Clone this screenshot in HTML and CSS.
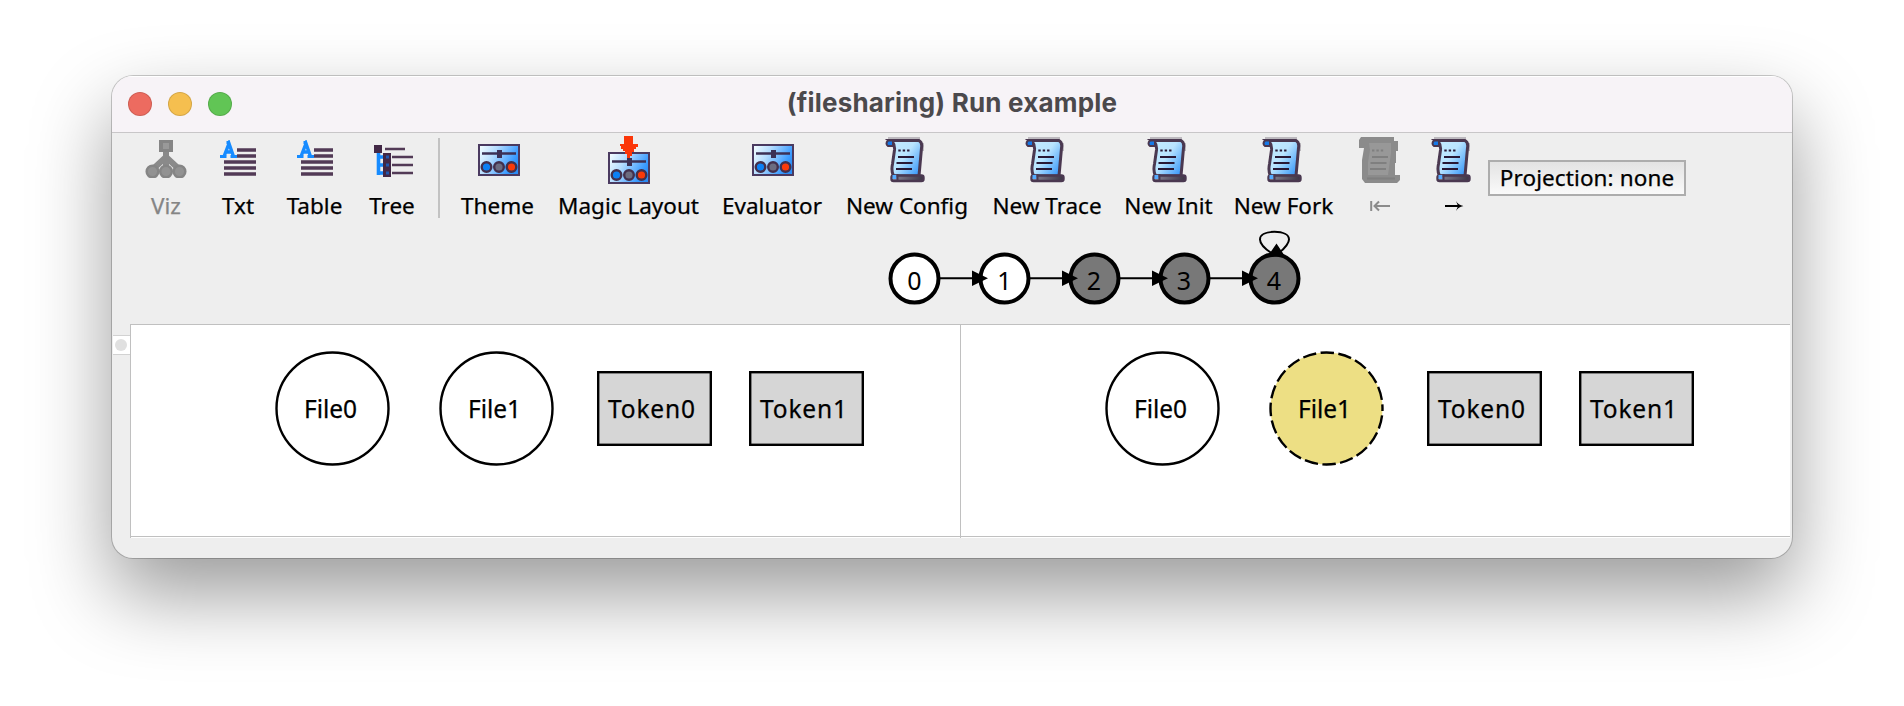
FILE: index.html
```html
<!DOCTYPE html>
<html lang="en">
<head>
<meta charset="utf-8">
<title>(filesharing) Run example</title>
<link rel="stylesheet" href="styles.css">
</head>
<body>
<svg class="defs" width="0" height="0" aria-hidden="true">
  <defs>
    <linearGradient id="panelBlue" x1="0" y1="0.2" x2="1" y2="0.6">
      <stop offset="0" stop-color="#eefaff"/><stop offset="0.35" stop-color="#b4dcff"/><stop offset="0.85" stop-color="#3b9bff"/><stop offset="1" stop-color="#2a8cf5"/>
    </linearGradient>
    <linearGradient id="paperBlue" x1="0" y1="0.1" x2="1" y2="0.9">
      <stop offset="0" stop-color="#c4ecff"/><stop offset="0.45" stop-color="#b9e4ff"/><stop offset="1" stop-color="#2f92f8"/>
    </linearGradient>
    <linearGradient id="rollGrey" x1="0" y1="0" x2="1" y2="0">
      <stop offset="0" stop-color="#8a8796"/><stop offset="1" stop-color="#3c3444"/>
    </linearGradient>
    <symbol id="text" viewBox="0 0 36 38">
      <path d="M17 10h19M17 16h19M4 22h32M4 28h32M4 34h32" stroke="#523a56" stroke-width="3.6"/>
      <path d="M4 16.5 9 3.5 13.5 16.500M5.500 12h7" fill="none" stroke="#168bff" stroke-width="3.400"/>
      <path d="M0 16.500h6.500M10.500 16.500h6.500M6.500 2.500h3" stroke="#168bff" stroke-width="3"/>
    </symbol>
    <symbol id="sliders" viewBox="0 0 42 32">
      <rect x="1" y="1" width="40" height="30" fill="url(#panelBlue)" stroke="#4a3a60" stroke-width="2"/>
      <path d="M4 9.500h34" stroke="#3c3055" stroke-width="2.400"/>
      <rect x="19" y="6" width="5" height="8" fill="#3c3055"/>
      <g stroke="#43304d" stroke-width="2.400"><circle cx="8.500" cy="23" r="4.800" fill="#0c80f5"/><circle cx="21" cy="23" r="4.800" fill="#6c6c80"/><circle cx="33.500" cy="23" r="4.800" fill="#fb3a09"/></g>
    </symbol>
    <symbol id="scroll" viewBox="0 0 42 48">
      <path d="M3 2h32M38 7v8" stroke="#bcb9be" stroke-width="2"/>
      <path d="M5 4.500h29q3.500 2 2.500 7.500L34 40H8.500q-2.500-5-1-12L9.500 14q.5-5-2-8z" fill="url(#paperBlue)" stroke="#4a3850" stroke-width="3"/>
      <path d="M3 4.500h5v5.500H3q-3-2.500 0-5.500z" fill="#167ae8" stroke="#4a3850" stroke-width="2"/>
      <path d="M13.300 14.500h2.400m2 0h2.400m2 0h2.400M13 21h16M11.500 27h16M11 33h16" stroke="#281835" stroke-width="2.200"/>
      <rect x="6.500" y="39.500" width="32" height="5.500" rx="2" fill="url(#rollGrey)" stroke="#4a3850" stroke-width="2.400"/>
      <path d="M7.500 39h4v4h-4z" fill="#54aaff"/><path d="M12.500 38v7" stroke="#4a3850" stroke-width="2"/>
    </symbol>
    <symbol id="scrollOff" viewBox="0 0 42 48">
      <path d="M3 1h33v4h4v10h-2v12h-1v12h5v5l-3 3H7l-3-4V24l2-12H1V4z" fill="#8b8b8b"/>
      <path d="M11 7h22v10l-3 22H10V26l2-12z" fill="#989898"/>
      <path d="M14 14.500h2.400m2 0h2.400m2 0h2.400M14 21h16M12.500 27h16M12 33h16M9 42.500h28" stroke="#7f7f7f" stroke-width="2"/>
    </symbol>
  </defs>
</svg>
<main class="window">
  <header class="titlebar">
    <div class="lights"><i class="light red"></i><i class="light amber"></i><i class="light green"></i></div>
    <h1 class="title">(filesharing) Run example</h1>
  </header>
  <nav class="toolbar">
    <div class="tool off"><svg class="icon" width="42" height="38" viewBox="0 0 42 38"><path d="M21 11v8M21 17 7 30M21 17l14 13M21 17v14" stroke="#8a8a8a" stroke-width="6" fill="none"/><rect x="14" y="0" width="14" height="12" fill="#858585"/><rect x="18" y="3" width="6" height="6" fill="#999"/><g fill="#929292" stroke="#858585" stroke-width="2.500"><circle cx="7.500" cy="31.500" r="5.800"/><circle cx="21" cy="31.500" r="5.800"/><circle cx="34.500" cy="31.500" r="5.800"/></g></svg><span class="label">Viz</span></div>
    <div class="tool"><svg class="icon" width="36" height="38"><use href="#text"/></svg><span class="label">Txt</span></div>
    <div class="tool"><svg class="icon" width="36" height="38"><use href="#text"/></svg><span class="label">Table</span></div>
    <div class="tool"><svg class="icon tree" width="40" height="38" viewBox="0 0 40 38"><path d="M4.500 10v25M4 17h8M4 25h8M4 33h8" fill="none" stroke="#168bff" stroke-width="3.600"/><path d="M11 9h20M18 17h21M18 25h21M18 33h21" stroke="#523a56" stroke-width="2.400"/><g fill="#422846"><rect x="0" y="5" width="8" height="8"/><rect x="9" y="13" width="8" height="8"/><rect x="9" y="21" width="8" height="8"/><rect x="9" y="29" width="8" height="8"/></g><path d="M12 17h3M12 25h3M12 33h3" stroke="#2058b0" stroke-width="3"/></svg><span class="label">Tree</span></div>
    <div class="divider"></div>
    <div class="tool"><svg class="icon mid" width="42" height="32"><use href="#sliders"/></svg><span class="label">Theme</span></div>
    <div class="tool"><svg class="icon magic" width="42" height="48" viewBox="0 0 42 48"><use href="#sliders" y="16" width="42" height="32"/><path d="M16 0h9v8h5v3h-2v2h-2v3h-2v4h-2v2h-3v-4h-2v-3h-2v-2h-2v-3h-1V8h4z" fill="#fb3609"/></svg><span class="label">Magic Layout</span></div>
    <div class="tool"><svg class="icon mid" width="42" height="32"><use href="#sliders"/></svg><span class="label">Evaluator</span></div>
    <div class="tool"><svg class="icon tall" width="42" height="48"><use href="#scroll"/></svg><span class="label">New Config</span></div>
    <div class="tool"><svg class="icon tall" width="42" height="48"><use href="#scroll"/></svg><span class="label">New Trace</span></div>
    <div class="tool"><svg class="icon tall" width="42" height="48"><use href="#scroll"/></svg><span class="label">New Init</span></div>
    <div class="tool"><svg class="icon tall" width="42" height="48"><use href="#scroll"/></svg><span class="label">New Fork</span></div>
    <div class="tool off"><svg class="icon tall" width="42" height="48"><use href="#scrollOff"/></svg><svg class="arrow" width="20" height="12" viewBox="0 0 20 12"><path d="M1.200 1v10M4 6h16M9 1.500 4.500 6 9 10.500" fill="none" stroke="#8b8b8b" stroke-width="2"/></svg></div>
    <div class="tool"><svg class="icon last" width="42" height="48"><use href="#scroll"/></svg><svg class="arrow next" width="20" height="12" viewBox="0 0 20 12"><path d="M1 6h15" stroke="#000" stroke-width="2.200"/><path d="M12 1q2 4 7.500 5Q14 7 12 11l2-5z" fill="#000"/></svg></div>
    <button class="projection">Projection: none</button>
  </nav>
  <svg class="trace" width="450" height="98" viewBox="870 226 450 98">
    <g stroke="#000" stroke-width="4" fill="#fff"><circle cx="914.500" cy="278.500" r="24"/><circle cx="1004.500" cy="278.500" r="24"/><g fill="#787878"><circle cx="1094.500" cy="278.500" r="24"/><circle cx="1184.500" cy="278.500" r="24"/><circle cx="1274.500" cy="278.500" r="24"/></g></g>
    <path d="M940 278.300h34M1030 278.300h34M1120 278.300h34M1210 278.300h34M1272 253.500C1262 247 1260 242 1260 239.500C1260 234.500 1266 231.800 1274.500 231.800S1289 234.500 1289 239.500C1289 242 1286 248 1278 253.500" fill="none" stroke="#000" stroke-width="2"/>
    <path d="M972 270.500v15.500l16-7.700zM1062 270.500v15.500l16-7.700zM1152 270.500v15.500l16-7.700zM1242 270.500v15.500l16-7.700zM1276.500 243.500l8 12-17.500 2z"/>
    <g class="digits"><text x="914.300" y="290">0</text><text x="1004.500" y="290">1</text><text x="1094" y="290">2</text><text x="1184" y="290">3</text><text x="1274" y="290">4</text></g>
  </svg>
  <section class="content">
    <aside class="rail"><div class="handle"><i class="knob"></i></div></aside>
    <div class="pane">
      <svg class="graph" width="829" height="211" viewBox="131 325 829 211">
        <g fill="#fff" stroke="#000" stroke-width="2.400"><circle cx="332.500" cy="408.500" r="56"/><circle cx="496.500" cy="408.500" r="56"/><g fill="#d6d6d6"><rect x="598.200" y="372.200" width="112.600" height="72.600"/><rect x="750.200" y="372.200" width="112.600" height="72.600"/></g></g>
        <g class="atoms"><text x="330.500" y="417.500" textLength="53">File0</text><text x="494.500" y="417.500" textLength="53">File1</text><text x="651.500" y="417.500" textLength="87">Token0</text><text x="803.500" y="417.500" textLength="87">Token1</text></g>
      </svg>
    </div>
    <div class="pane">
      <svg class="graph" width="829" height="211" viewBox="131 325 829 211">
        <g fill="#fff" stroke="#000" stroke-width="2.400"><circle cx="332.500" cy="408.500" r="56"/><circle cx="496.500" cy="408.500" r="56" fill="#eddf84" stroke-dasharray="13.500 4.400" stroke-dashoffset="11"/><g fill="#d6d6d6"><rect x="598.200" y="372.200" width="112.600" height="72.600"/><rect x="750.200" y="372.200" width="112.600" height="72.600"/></g></g>
        <g class="atoms"><text x="330.500" y="417.500" textLength="53">File0</text><text x="494.500" y="417.500" textLength="53">File1</text><text x="651.500" y="417.500" textLength="87">Token0</text><text x="803.500" y="417.500" textLength="87">Token1</text></g>
      </svg>
    </div>
  </section>
</main>
</body>
</html>
```
FILE: styles.css
```css
* { box-sizing: border-box; }
body { margin: 0; height: 706px; overflow: hidden; background: #fff; color: #000; font-family: "Noto Sans", "Open Sans", sans-serif; }
.defs { display: block; }
.window { width: 1680px; height: 482px; margin: 76px 112px 0; overflow: hidden; border-radius: 21px; background: #eee; box-shadow: 0 0 0 1px rgba(0,0,0,.2), 0 36px 80px rgba(0,0,0,.4); }
.titlebar { display: grid; grid-template-columns: 160px 1fr 160px; align-items: center; height: 57px; padding: 0 1px 1px 16px; background: #f7f3f7; border-bottom: 1px solid #c8c6c8; box-shadow: inset 0 1px #fff; }
.lights { display: flex; gap: 16px; }
.light { width: 24px; height: 24px; border-radius: 50%; border: 1px solid rgba(0,0,0,.13); }
.red { background: #ed6b60; }
.amber { background: #f5bf4f; }
.green { background: #61c555; }
.title { margin: -2px 0 0 -15px; text-align: center; font: 700 26px/32px Inter, sans-serif; letter-spacing: .2px; color: #4b494c; }
.toolbar { display: grid; grid-template-columns: 68px 76px 77px 78px 16px 101px 161px 126px 144px 136px 107px 123px 70px 73px 198px; height: 93px; padding-left: 20px; }
.tool { display: flex; flex-direction: column; align-items: center; }
.icon { flex: none; margin-top: 7px; }
.icon.tree { margin-left: 3px; }
.icon.mid { margin: 11px 0 2px 2px; }
.icon.magic { margin: 3px 0 -6px; }
.icon.tall { margin: 3px 2px -6px 0; }
.icon.last { margin: 3px 0 -6px; }
.label { margin-top: 12px; font-size: 22.5px; line-height: 32px; white-space: nowrap; -webkit-text-stroke: .25px currentColor; }
.off .label { color: #858585; }
.arrow { margin-top: 22px; }
.arrow.next { margin-left: 4px; }
.divider { width: 2px; height: 80px; margin: 5px 0 0 7px; background: #c2c2c2; }
.projection { height: 36px; margin-top: 27px; padding: 0; border: 2px solid #adadad; background: linear-gradient(#e3e3e3, #fafafa); color: #000; font: 22.5px/30px "Noto Sans", sans-serif; letter-spacing: .1px; white-space: nowrap; -webkit-text-stroke: .25px currentColor; }
.trace { display: block; margin-left: 758px; }
.digits, .atoms { font-size: 25px; text-anchor: middle; }
.atoms { font-size: 24.5px; stroke: #000; stroke-width: .25px; }
.content { display: grid; grid-template-columns: 18px 830px 830px; height: 214px; }
.rail { padding: 11px 0 0 1px; }
.handle { display: flex; align-items: center; justify-content: center; height: 20px; padding-right: 1px; border: solid #d2d2d2; border-width: 1px 0; background: #fff; }
.knob { width: 12px; height: 12px; border-radius: 50%; background: #e0e0e0; }
.pane { height: 214px; background: linear-gradient(#c0c0c0, #c0c0c0) 0 211px / 100% 1px no-repeat #fff; border: solid #c0c0c0; border-width: 1px 0 0 1px; }
.graph { display: block; }
```
